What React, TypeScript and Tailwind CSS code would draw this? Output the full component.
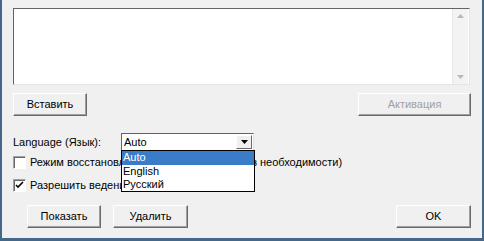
import React from "react";

const font = { fontFamily: '"Liberation Sans", Arial, sans-serif' };

function Btn({ children, className = "", disabled = false }: { children: React.ReactNode; className?: string; disabled?: boolean }) {
  return (
    <div
      className={
        "h-[23px] flex items-center justify-center bg-[#f0f0f0] border border-t-white border-l-white border-r-[#696969] border-b-[#696969] shadow-[inset_-1px_-1px_0_#a0a0a0] text-[11px] " +
        (disabled ? "text-[#a0a0a0] " : "text-black ") +
        className
      }
    >
      {children}
    </div>
  );
}

function Check({ checked }: { checked?: boolean }) {
  return (
    <div className="w-[13px] h-[13px] bg-white border border-t-[#a0a0a0] border-l-[#a0a0a0] border-r-white border-b-white shadow-[inset_1px_1px_0_#696969] flex items-center justify-center">
      {checked && (
        <svg width="9" height="9" viewBox="0 0 9 9">
          <path d="M1 4 L3 6 L8 1" stroke="black" strokeWidth="1.6" fill="none" />
        </svg>
      )}
    </div>
  );
}

export default function App() {
  return (
    <div style={font} className="w-[484px] h-[241px] bg-[#f0f0f0] border-l-2 border-r-2 border-b-[3px] border-[#44688a] relative overflow-hidden text-[11px] text-black">
      <div className="pl-[11px] pr-[11px] pt-[8px] flex flex-col">
        {/* text area */}
        <div className="w-[457px] h-[77px] bg-white border border-t-[#646464] border-l-[#646464] border-r-[#e3e3e3] border-b-[#e3e3e3] flex justify-end">
          <div className="w-[16px] h-full bg-[#f3f3f3] border-l border-[#e8e8e8] flex flex-col items-center justify-between py-[5px] mr-[1px]">
            <svg width="7" height="4" viewBox="0 0 7 4"><path d="M0 4 L3.5 0 L7 4 Z" fill="#b8b8b8" /></svg>
            <svg width="7" height="4" viewBox="0 0 7 4"><path d="M0 0 L3.5 4 L7 0 Z" fill="#b8b8b8" /></svg>
          </div>
        </div>

        {/* button row */}
        <div className="mt-[8px] flex justify-between">
          <Btn className="w-[74px]">Вставить</Btn>
          <Btn className="w-[113px]" disabled>Активация</Btn>
        </div>

        {/* language row */}
        <div className="mt-[17px] flex items-center h-[18px]">
          <div className="w-[108px]">Language (Язык):</div>
          <div className="relative w-[133px] h-[18px] bg-white border border-t-[#646464] border-l-[#646464] border-r-[#e3e3e3] border-b-[#e3e3e3] flex items-center z-10">
            <span className="pl-[2px] flex-1">Auto</span>
            <div className="w-[16px] h-[14px] mr-[1px] bg-[#f0f0f0] border border-t-white border-l-white border-r-[#696969] border-b-[#696969] flex items-center justify-center">
              <svg width="7" height="4" viewBox="0 0 7 4"><path d="M0 0 L3.5 4 L7 0 Z" fill="black" /></svg>
            </div>
            <div className="absolute left-[-1px] top-[16px] w-[134px] bg-white border border-black flex flex-col leading-[13px]">
              <div className="bg-[#3a7cc8] text-white pl-[1px] h-[14px]">Auto</div>
              <div className="pl-[1px] h-[13px]">English</div>
              <div className="pl-[1px] h-[13px]">Русский</div>
            </div>
          </div>
        </div>

        {/* checkboxes */}
        <div className="mt-[5px] flex items-center gap-[4px] h-[13px] whitespace-nowrap">
          <Check />
          <span>Режим восстановления (в случае если и без необходимости)</span>
        </div>
        <div className="mt-[10px] flex items-center gap-[4px] h-[13px] whitespace-nowrap">
          <Check checked />
          <span>Разрешить ведение лог-файла</span>
        </div>

        {/* bottom buttons */}
        <div className="mt-[13px] flex pl-[14px]">
          <Btn className="w-[74px]">Показать</Btn>
          <Btn className="w-[75px] ml-[12px]">Удалить</Btn>
          <div className="flex-1" />
          <Btn className="w-[75px]">OK</Btn>
        </div>
      </div>
    </div>
  );
}
